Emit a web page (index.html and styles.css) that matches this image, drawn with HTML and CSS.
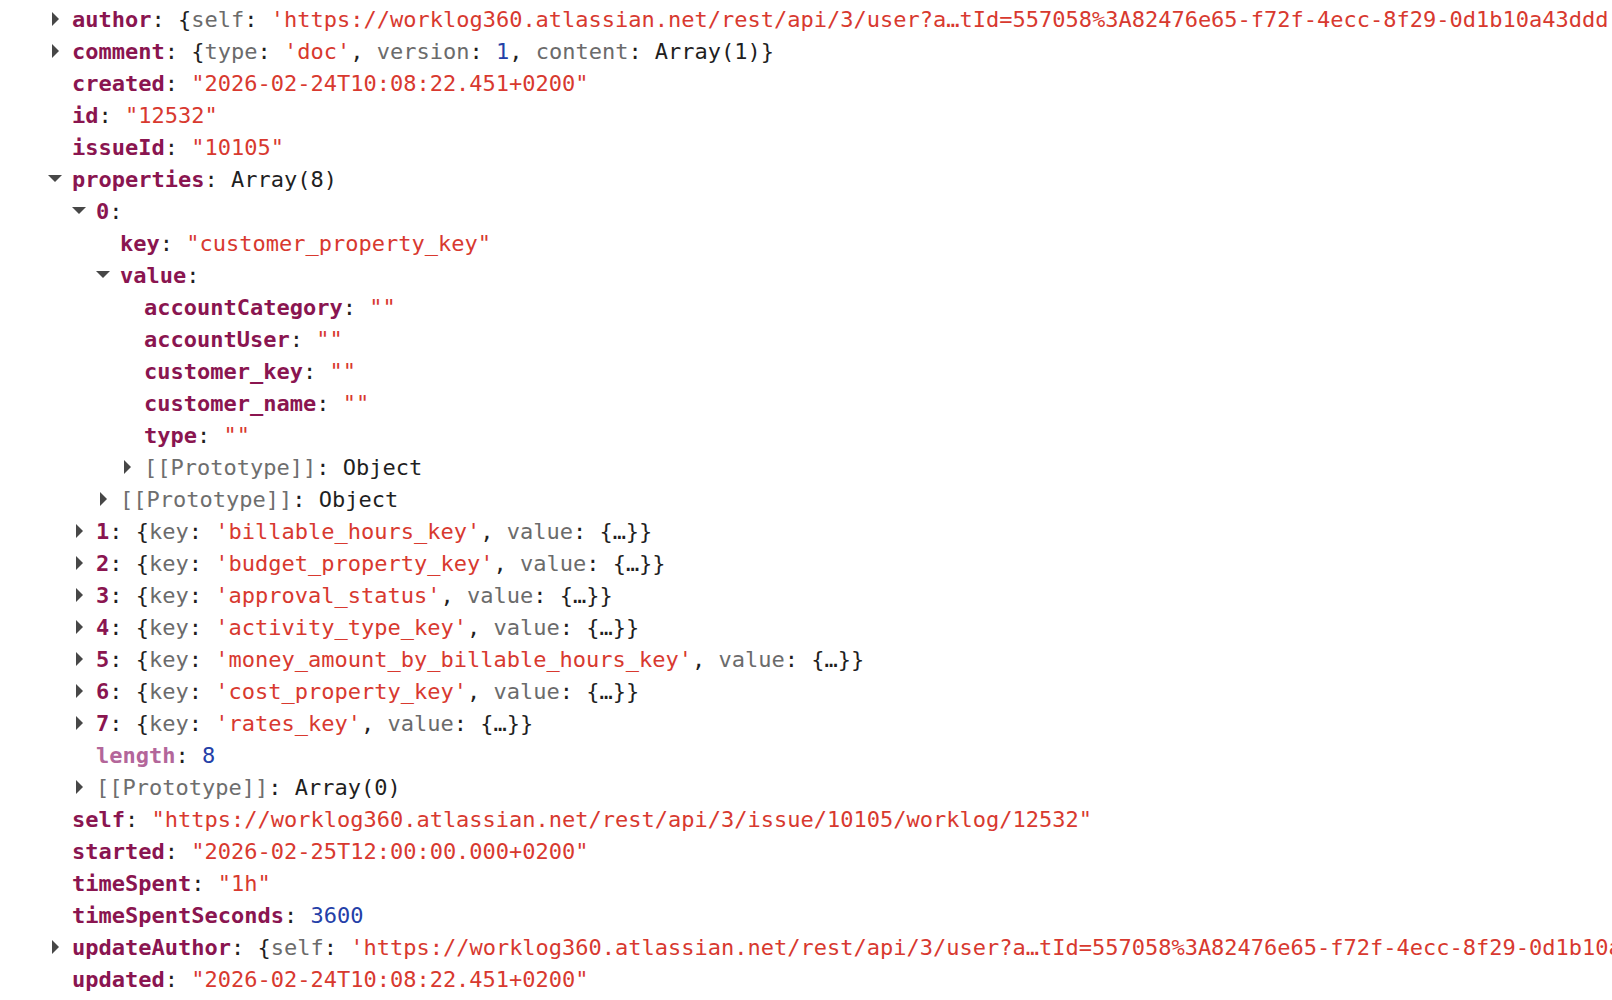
FILE: index.html
```html
<!DOCTYPE html>
<html>
<head>
<meta charset="utf-8">
<link rel="stylesheet" href="styles.css">
</head>
<body>
<div class="tree">
  <div class="row l0"><span class="tg right"></span><span class="k">author</span>: {<span class="pk">self</span>: <span class="s">'https://worklog360.atlassian.net/rest/api/3/user?a…tId=557058%3A82476e65-f72f-4ecc-8f29-0d1b10a43ddd'</span>, <span class="pk">accountId</span>: <span class="s">'557058:82476e65'</span>}</div>
  <div class="row l0"><span class="tg right"></span><span class="k">comment</span>: {<span class="pk">type</span>: <span class="s">'doc'</span>, <span class="pk">version</span>: <span class="n">1</span>, <span class="pk">content</span>: Array(1)}</div>
  <div class="row l0"><span class="tg"></span><span class="k">created</span>: <span class="s">"2026-02-24T10:08:22.451+0200"</span></div>
  <div class="row l0"><span class="tg"></span><span class="k">id</span>: <span class="s">"12532"</span></div>
  <div class="row l0"><span class="tg"></span><span class="k">issueId</span>: <span class="s">"10105"</span></div>
  <div class="row l0"><span class="tg down"></span><span class="k">properties</span>: Array(8)</div>
  <div class="row l1"><span class="tg down"></span><span class="k">0</span>:</div>
  <div class="row l2"><span class="tg"></span><span class="k">key</span>: <span class="s">"customer_property_key"</span></div>
  <div class="row l2"><span class="tg down"></span><span class="k">value</span>:</div>
  <div class="row l3"><span class="tg"></span><span class="k">accountCategory</span>: <span class="s">""</span></div>
  <div class="row l3"><span class="tg"></span><span class="k">accountUser</span>: <span class="s">""</span></div>
  <div class="row l3"><span class="tg"></span><span class="k">customer_key</span>: <span class="s">""</span></div>
  <div class="row l3"><span class="tg"></span><span class="k">customer_name</span>: <span class="s">""</span></div>
  <div class="row l3"><span class="tg"></span><span class="k">type</span>: <span class="s">""</span></div>
  <div class="row l3"><span class="tg right"></span><span class="proto">[[Prototype]]</span>: Object</div>
  <div class="row l2"><span class="tg right"></span><span class="proto">[[Prototype]]</span>: Object</div>
  <div class="row l1"><span class="tg right"></span><span class="k">1</span>: {<span class="pk">key</span>: <span class="s">'billable_hours_key'</span>, <span class="pk">value</span>: {…}}</div>
  <div class="row l1"><span class="tg right"></span><span class="k">2</span>: {<span class="pk">key</span>: <span class="s">'budget_property_key'</span>, <span class="pk">value</span>: {…}}</div>
  <div class="row l1"><span class="tg right"></span><span class="k">3</span>: {<span class="pk">key</span>: <span class="s">'approval_status'</span>, <span class="pk">value</span>: {…}}</div>
  <div class="row l1"><span class="tg right"></span><span class="k">4</span>: {<span class="pk">key</span>: <span class="s">'activity_type_key'</span>, <span class="pk">value</span>: {…}}</div>
  <div class="row l1"><span class="tg right"></span><span class="k">5</span>: {<span class="pk">key</span>: <span class="s">'money_amount_by_billable_hours_key'</span>, <span class="pk">value</span>: {…}}</div>
  <div class="row l1"><span class="tg right"></span><span class="k">6</span>: {<span class="pk">key</span>: <span class="s">'cost_property_key'</span>, <span class="pk">value</span>: {…}}</div>
  <div class="row l1"><span class="tg right"></span><span class="k">7</span>: {<span class="pk">key</span>: <span class="s">'rates_key'</span>, <span class="pk">value</span>: {…}}</div>
  <div class="row l1"><span class="tg"></span><span class="k ne">length</span>: <span class="n">8</span></div>
  <div class="row l1"><span class="tg right"></span><span class="proto">[[Prototype]]</span>: Array(0)</div>
  <div class="row l0"><span class="tg"></span><span class="k">self</span>: <span class="s">"https://worklog360.atlassian.net/rest/api/3/issue/10105/worklog/12532"</span></div>
  <div class="row l0"><span class="tg"></span><span class="k">started</span>: <span class="s">"2026-02-25T12:00:00.000+0200"</span></div>
  <div class="row l0"><span class="tg"></span><span class="k">timeSpent</span>: <span class="s">"1h"</span></div>
  <div class="row l0"><span class="tg"></span><span class="k">timeSpentSeconds</span>: <span class="n">3600</span></div>
  <div class="row l0"><span class="tg right"></span><span class="k">updateAuthor</span>: {<span class="pk">self</span>: <span class="s">'https://worklog360.atlassian.net/rest/api/3/user?a…tId=557058%3A82476e65-f72f-4ecc-8f29-0d1b10a43ddd'</span>}</div>
  <div class="row l0"><span class="tg"></span><span class="k">updated</span>: <span class="s">"2026-02-24T10:08:22.451+0200"</span></div>
</div>
</body>
</html>
```

FILE: styles.css
```css
html, body {
  margin: 0;
  padding: 0;
  background: #ffffff;
  overflow: hidden;
  width: 1612px;
  height: 1000px;
}

.tree {
  padding-top: 4px;
  font-family: "DejaVu Sans Mono", "Liberation Mono", monospace;
  font-size: 22px;
  line-height: 32px;
  color: #1f1f1f;
}

.row {
  display: block;
  height: 32px;
  white-space: pre;
  overflow: hidden;
}

.l0 { padding-left: 48px; }
.l1 { padding-left: 72px; }
.l2 { padding-left: 96px; }
.l3 { padding-left: 120px; }

.tg {
  display: inline-block;
  vertical-align: top;
  width: 24px;
  height: 32px;
  position: relative;
}

.tg.right::before {
  content: "";
  position: absolute;
  left: 4px;
  top: 8px;
  width: 0;
  height: 0;
  border-left: 7px solid #474747;
  border-top: 7px solid transparent;
  border-bottom: 7px solid transparent;
}

.tg.down::before {
  content: "";
  position: absolute;
  left: 0;
  top: 11px;
  width: 0;
  height: 0;
  border-top: 7px solid #474747;
  border-left: 7px solid transparent;
  border-right: 7px solid transparent;
}

.k {
  font-weight: bold;
  color: #8a1550;
}

.k.ne {
  color: #b3669a;
}

.pk {
  color: #6b6b6b;
}

.s {
  color: #d8392f;
}

.n {
  color: #2440a8;
}

.proto {
  color: #6e6e6e;
}
```
